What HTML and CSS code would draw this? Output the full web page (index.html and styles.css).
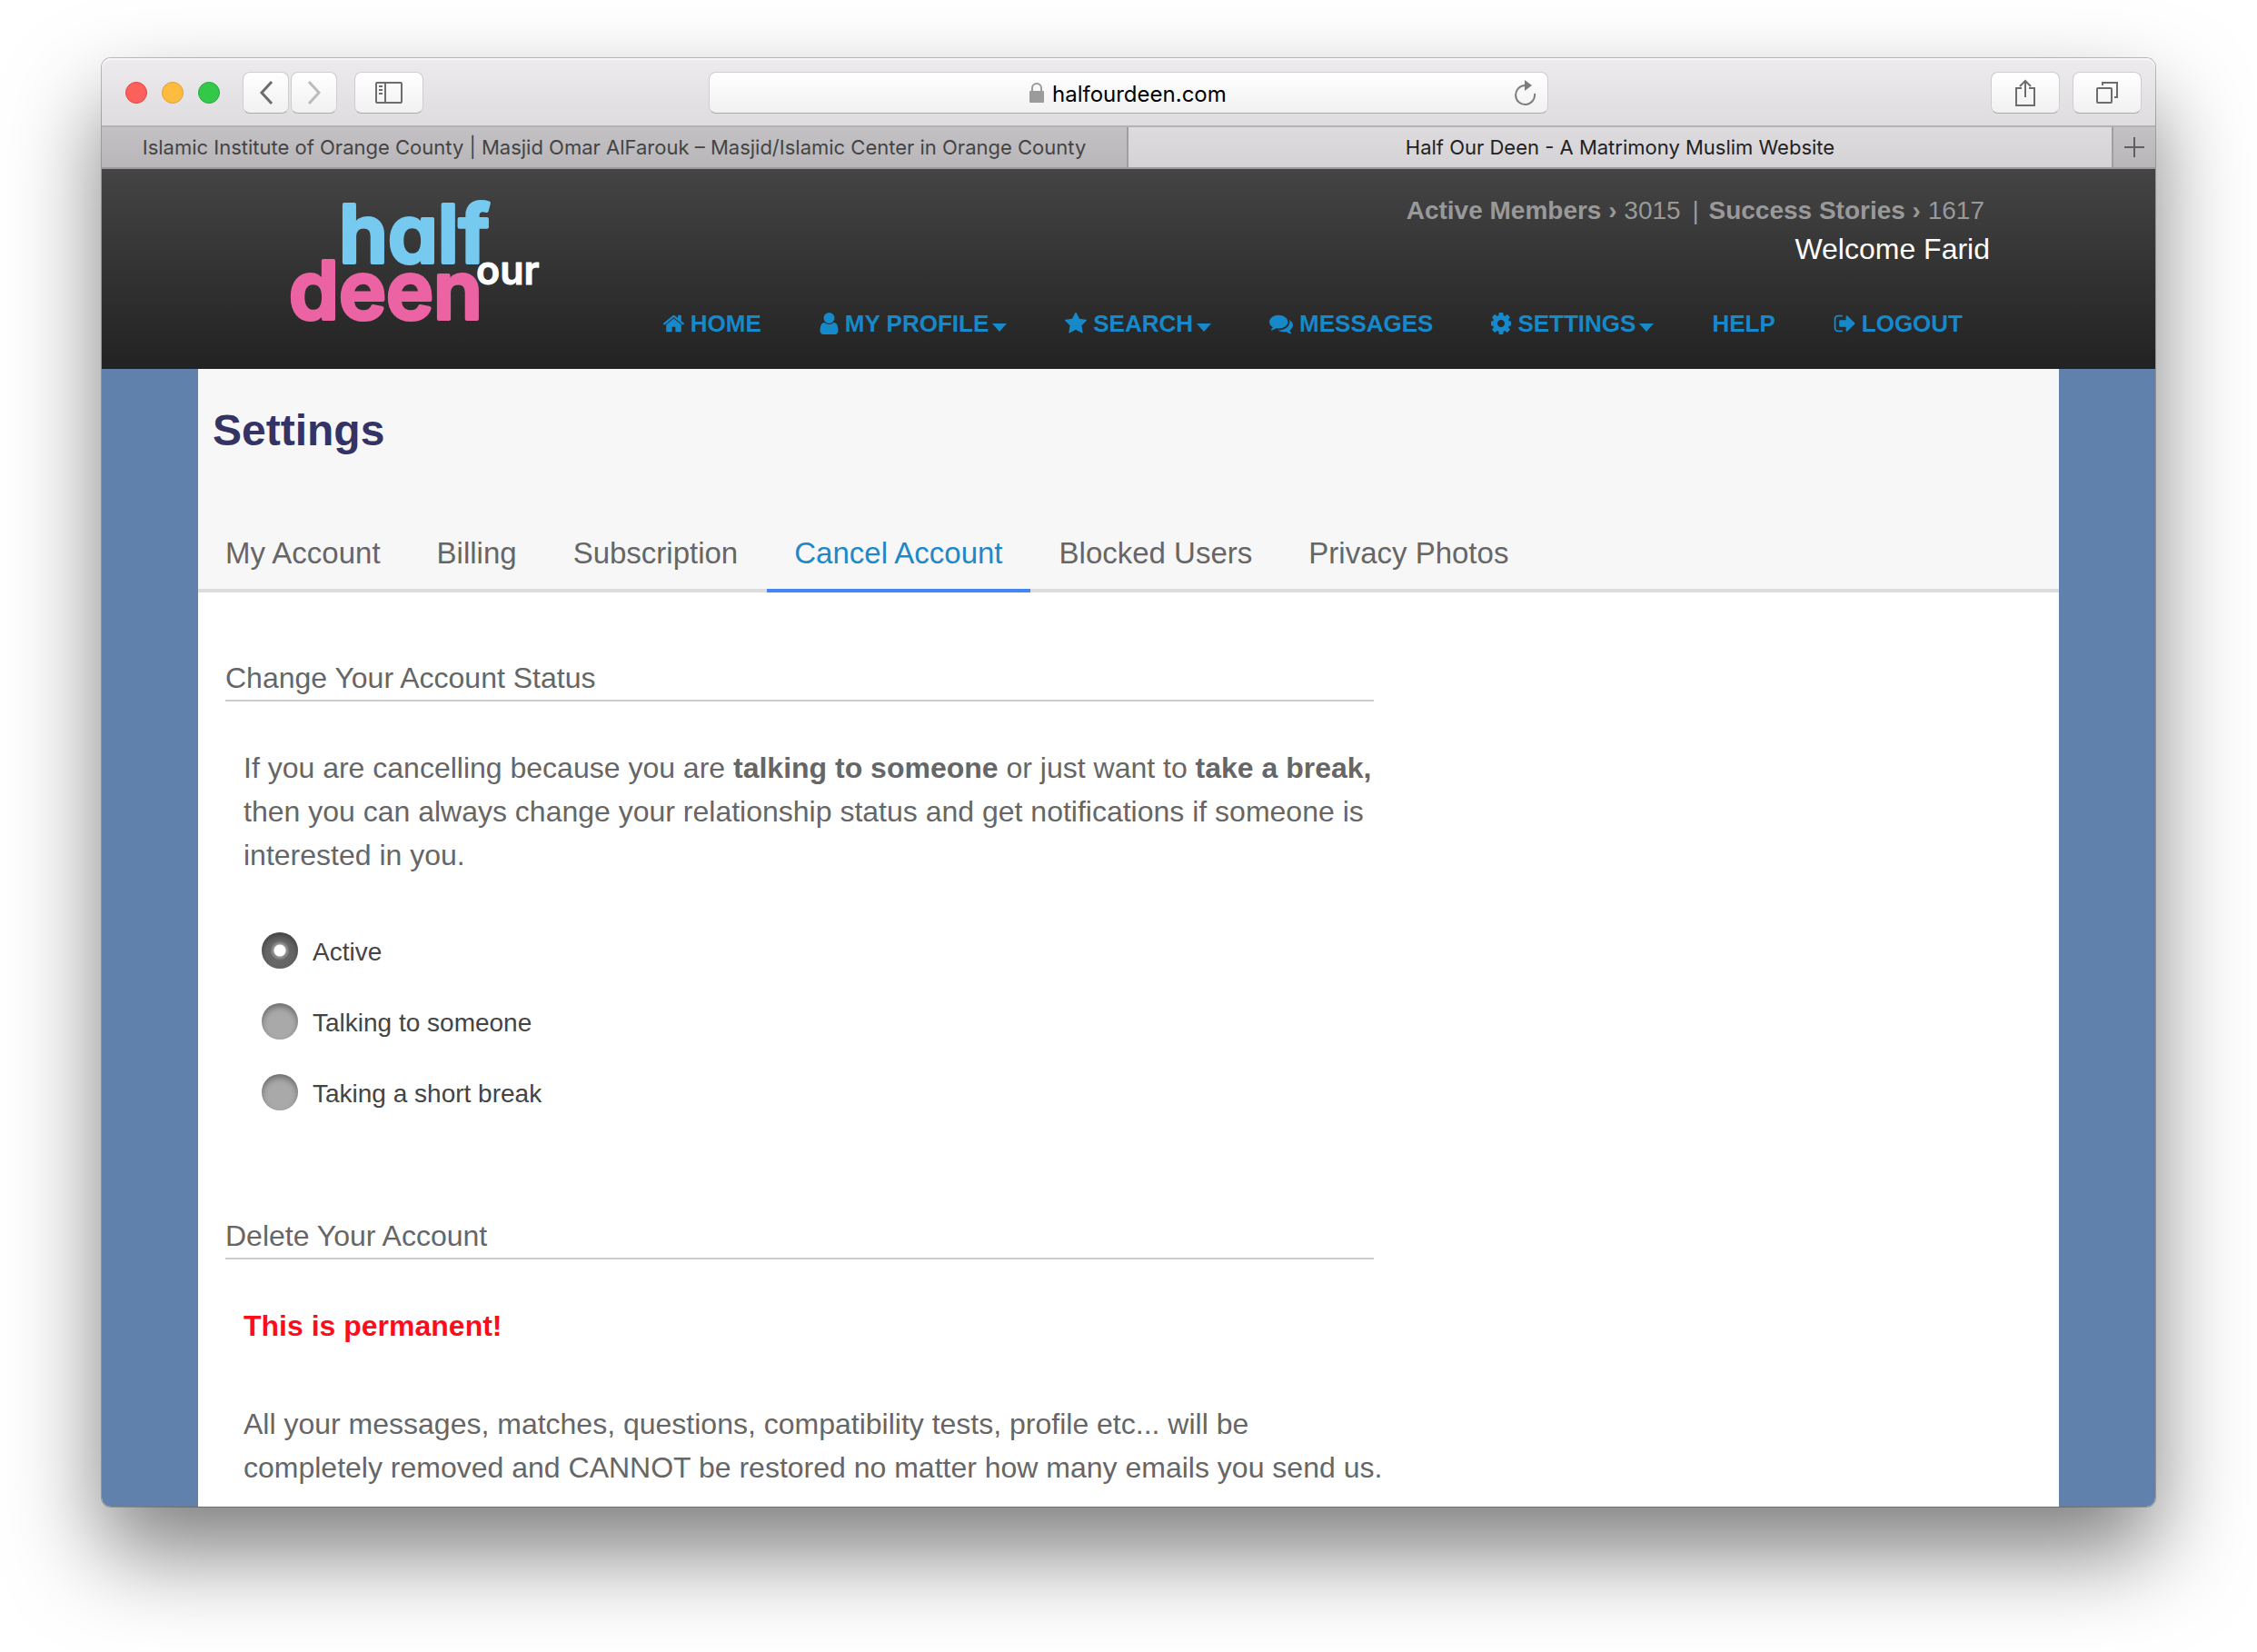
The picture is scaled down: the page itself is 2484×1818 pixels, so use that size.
FILE: index.html
```html
<!DOCTYPE html>
<html lang="en">
<head>
<meta charset="utf-8">
<meta name="viewport" content="width=device-width, initial-scale=1">
<title>Half Our Deen - A Matrimony Muslim Website</title>
<link rel="stylesheet" href="styles.css">
</head>
<body>
<div class="window">
  <div class="toolbar">
    <div class="toolbar-left">
      <div class="lights">
        <button class="light light-close" type="button" aria-label="Close"></button>
        <button class="light light-min" type="button" aria-label="Minimize"></button>
        <button class="light light-zoom" type="button" aria-label="Zoom"></button>
      </div>
      <div class="history">
        <button class="tool tool-narrow" type="button" aria-label="Back">
          <svg width="16" height="28" viewBox="0 0 16 28" fill="none" stroke="#6d6d6d" stroke-width="3"><path d="M14 2 3 14l11 12"/></svg>
        </button>
        <button class="tool tool-narrow" type="button" aria-label="Forward">
          <svg width="16" height="28" viewBox="0 0 16 28" fill="none" stroke="#bcbcbc" stroke-width="3"><path d="M2 2l11 12L2 26"/></svg>
        </button>
      </div>
      <button class="tool" type="button" aria-label="Sidebar">
        <svg width="30" height="24" viewBox="0 0 30 24" fill="none" stroke="#6d6d6d" stroke-width="2"><rect x="1" y="1" width="28" height="22" rx="1"/><path d="M11 1v22M4 5h4M4 9h4M4 13h4"/></svg>
      </button>
    </div>
    <div class="address">
      <svg width="16" height="22" viewBox="0 0 16 22"><path d="M1 9h14q1 0 1 1v11q0 1-1 1H1q-1 0-1-1V10q0-1 1-1z" fill="#9b9b9b"/><path d="M3 10V6a5 5 0 0 1 10 0v4" fill="none" stroke="#9b9b9b" stroke-width="2"/></svg>
      <input class="address-input" type="text" value="halfourdeen.com" aria-label="Address">
      <button class="reload" type="button" aria-label="Reload">
        <svg width="24" height="28" viewBox="0 0 24 28"><path d="M22 15a10.500 10.500 0 1 1-10.500-9" fill="none" stroke="#7d7d7d" stroke-width="2"/><path d="M11 0l8 6-8 6z" fill="#7d7d7d"/></svg>
      </button>
    </div>
    <div class="toolbar-right">
      <button class="tool" type="button" aria-label="Share">
        <svg width="24" height="32" viewBox="0 0 24 32" fill="none" stroke="#6d6d6d" stroke-width="2"><path d="M8 11H2v19h20V11h-6M12 21V3M6 9l6-6 6 6"/></svg>
      </button>
      <button class="tool" type="button" aria-label="Show all tabs">
        <svg width="26" height="26" viewBox="0 0 26 26" fill="none" stroke="#6d6d6d" stroke-width="2"><rect x="2" y="8" width="16" height="16" rx="1"/><path d="M8 5V2h16v16h-3"/></svg>
      </button>
    </div>
  </div>

  <nav class="browser-tabs" aria-label="Browser tabs">
    <a class="browser-tab" href="#iioc">Islamic Institute of Orange County | Masjid Omar AlFarouk – Masjid/Islamic Center in Orange County</a>
    <a class="browser-tab browser-tab-current" href="#hod">Half Our Deen - A Matrimony Muslim Website</a>
    <button class="new-tab" type="button" aria-label="New tab">
      <svg width="22" height="22" viewBox="0 0 22 22" stroke="#5f5f5f" stroke-width="2"><path d="M11 0v22M0 11h22"/></svg>
    </button>
  </nav>

  <div class="site">
    <header class="site-header">
      <a class="logo" href="#top" aria-label="half our deen">
        <svg width="280" height="190" viewBox="0 0 280 190">
          <text class="logo-word logo-half" x="55" y="103">half</text>
          <text class="logo-word logo-deen" x="0" y="165">deen</text>
          <text class="logo-our" x="206" y="127">our</text>
        </svg>
      </a>
      <div class="header-side">
        <p class="stats"><strong>Active Members ›</strong> 3015 <span class="stats-bar">|</span> <strong>Success Stories ›</strong> 1617</p>
        <p class="welcome">Welcome Farid</p>
        <nav class="menu" aria-label="Main">
          <a class="menu-link" href="#home">
            <svg class="menu-icon" width="23" height="26" viewBox="96 0 1600 1792"><path d="M1472 992v480q0 26-19 45t-45 19h-384v-384h-256v384h-384q-26 0-45-19t-19-45v-480q0-1 .5-3t.5-3l575-474 575 474q1 2 1 6zm223-69l-62 74q-8 9-21 11h-3q-13 0-21-7l-692-577-692 577q-12 8-24 7-13-2-21-11l-62-74q-8-10-7-23.500t11-21.500l719-599q32-26 76-26t76 26l244 204v-195q0-14 9-23t23-9h192q14 0 23 9t9 23v408l219 182q10 8 11 21.500t-7 23.500z"/></svg>
            HOME</a>
          <a class="menu-link" href="#profile">
            <svg class="menu-icon" width="21" height="28" viewBox="256 0 1280 1792"><path d="M1536 1399q0 109-62.500 187t-150.500 78h-854q-88 0-150.500-78t-62.500-187q0-85 8.500-160.500t31.500-152 58.500-131 94-89 134.500-34.500q131 128 313 128t313-128q76 0 134.500 34.500t94 89 58.500 131 31.500 152 8.500 160.500zm-256-887q0 159-112.500 271.500t-271.500 112.500-271.500-112.500-112.500-271.500 112.500-271.500 271.500-112.500 271.500 112.500 112.500 271.500z"/></svg>
            MY PROFILE<svg class="caret" width="16" height="9" viewBox="0 0 16 9"><path d="M0 0h16L8 9z"/></svg></a>
          <a class="menu-link" href="#search">
            <svg class="menu-icon" width="24" height="26" viewBox="64 0 1664 1792"><path d="M1728 647q0 22-26 48l-363 354 86 500q1 7 1 20 0 21-10.500 35.500t-30.500 14.500q-19 0-40-12l-449-236-449 236q-22 12-40 12-21 0-31.500-14.500t-10.500-35.500q0-6 2-20l86-500-364-354q-25-27-25-48 0-37 56-46l502-73 225-455q19-41 49-41t49 41l225 455 502 73q56 9 56 46z"/></svg>
            SEARCH<svg class="caret" width="16" height="9" viewBox="0 0 16 9"><path d="M0 0h16L8 9z"/></svg></a>
          <a class="menu-link" href="#messages">
            <svg class="menu-icon" width="26" height="26" viewBox="0 0 1792 1792"><path d="M1408 768q0 139-94 257t-256.500 186.500-353.500 68.500q-86 0-176-16-124 88-278 128-36 9-86 16h-3q-11 0-20.500-8t-11.500-21q-1-3-1-6.500t.5-6.500 2-6l2.500-5 3.500-5.500 4-5 4.500-5 4-4.500q5-6 23-25t26-29.500 22.500-29 25-38.500 20.500-44q-124-72-195-177t-71-224q0-139 94-257t256.500-186.500 353.500-68.500 353.500 68.500 256.500 186.500 94 257zm384 256q0 120-71 224.500t-195 176.500q10 24 20.500 44t25 38.500 22.500 29 26 29.500 23 25q1 1 4 4.500t4.500 5 4 5 3.500 5.500l2.500 5 2 6 .5 6.500-1 6.500q-3 14-13 22t-22 7q-50-7-86-16-154-40-278-128-90 16-176 16-271 0-472-132 58 4 88 4 161 0 309-45t264-129q125-92 192-212t67-254q0-77-23-152 129 71 204 178t75 230z"/></svg>
            MESSAGES</a>
          <a class="menu-link" href="#settings">
            <svg class="menu-icon" width="22" height="28" viewBox="192 0 1408 1792"><path d="M1152 896q0-106-75-181t-181-75-181 75-75 181 75 181 181 75 181-75 75-181zm512-109v222q0 12-8 23t-20 13l-185 28q-19 54-39 91 35 50 107 138 10 12 10 25t-9 23q-27 37-99 108t-94 71q-12 0-26-9l-138-108q-44 23-91 38-16 136-29 186-7 28-36 28h-222q-14 0-24.500-8.500t-11.500-21.500l-28-184q-49-16-90-37l-141 107q-10 9-25 9-14 0-25-11-126-114-165-168-7-10-7-23 0-12 8-23 15-21 51-66.500t54-70.500q-27-50-41-99l-183-27q-13-2-21-12.500t-8-23.500v-222q0-12 8-23t19-13l186-28q14-46 39-92-40-57-107-138-10-12-10-24 0-10 9-23 26-36 98.500-107.500t94.500-71.500q13 0 26 10l138 107q44-23 91-38 16-136 29-186 7-28 36-28h222q14 0 24.500 8.500t11.500 21.500l28 184q49 16 90 37l142-107q9-9 24-9 13 0 25 10 129 119 165 170 7 8 7 22 0 12-8 23-15 21-51 66.500t-54 70.500q26 50 41 98l183 28q13 2 21 12.500t8 23.500z"/></svg>
            SETTINGS<svg class="caret" width="16" height="9" viewBox="0 0 16 9"><path d="M0 0h16L8 9z"/></svg></a>
          <a class="menu-link" href="#help">HELP</a>
          <a class="menu-link" href="#logout">
            <svg class="menu-icon" width="24" height="26" viewBox="64 0 1568 1792"><path d="M704 1440q0 4 1 20t.5 26.500-3 23.500-10 19.500-20.500 6.500h-320q-119 0-203.500-84.500t-84.500-203.500v-704q0-119 84.500-203.500t203.500-84.500h320q13 0 22.500 9.500t9.500 22.500q0 4 1 20t.5 26.500-3 23.500-10 19.500-20.500 6.500h-320q-66 0-113 47t-47 113v704q0 66 47 113t113 47h312l11.500 1 11.500 3 8 5.500 7 9 2 13.500zm928-544q0 26-19 45l-544 544q-19 19-45 19t-45-19-19-45v-288h-448q-26 0-45-19t-19-45v-384q0-26 19-45t45-19h448v-288q0-26 19-45t45-19 45 19l544 544q19 19 19 45z"/></svg>
            LOGOUT</a>
        </nav>
      </div>
    </header>

    <main class="panel">
      <div class="panel-head">
        <h1 class="title">Settings</h1>
        <nav class="tabs" aria-label="Settings">
          <a class="tab" href="#account">My Account</a>
          <a class="tab" href="#billing">Billing</a>
          <a class="tab" href="#subscription">Subscription</a>
          <a class="tab tab-current" href="#cancel" aria-current="page">Cancel Account</a>
          <a class="tab" href="#blocked">Blocked Users</a>
          <a class="tab" href="#photos">Privacy Photos</a>
        </nav>
      </div>
      <section class="section">
        <h2 class="section-title">Change Your Account Status</h2>
        <p class="copy">If you are cancelling because you are <strong>talking to someone</strong> or just want to <strong>take a break,</strong><br>then you can always change your relationship status and get notifications if someone is<br>interested in you.</p>
        <div class="choices" role="radiogroup" aria-label="Account status">
          <label class="choice"><input class="radio" type="radio" name="status" checked>Active</label>
          <label class="choice"><input class="radio" type="radio" name="status">Talking to someone</label>
          <label class="choice"><input class="radio" type="radio" name="status">Taking a short break</label>
        </div>
      </section>
      <section class="section section-delete">
        <h2 class="section-title">Delete Your Account</h2>
        <p class="copy warning">This is permanent!</p>
        <p class="copy">All your messages, matches, questions, compatibility tests, profile etc... will be<br>completely removed and CANNOT be restored no matter how many emails you send us.</p>
      </section>
    </main>
  </div>
</div>
</body>
</html>
```
FILE: styles.css
```css
* {
  box-sizing: border-box;
}

body {
  margin: 0;
  padding: 64px 112px 160px;
  background: #fff;
  color: #666;
  font-family: "Liberation Sans", Arial, sans-serif;
  font-size: 32px;
  line-height: 48px;
}

h1, h2, p {
  margin: 0;
}

a {
  color: inherit;
  text-decoration: none;
}

button {
  padding: 0;
  border: 0;
  background: none;
}

svg {
  display: block;
  flex: none;
}

.window {
  display: flex;
  flex-direction: column;
  border-radius: 10px;
  box-shadow: 0 0 0 1px rgba(0, 0, 0, 0.24), 0 50px 100px rgba(0, 0, 0, 0.51);
}

/* Browser toolbar */

.toolbar {
  display: grid;
  grid-template-columns: minmax(0, 29fr) minmax(0, 41fr) minmax(0, 29fr);
  align-items: center;
  height: 76px;
  padding: 2px 15px 0;
  border-bottom: 2px solid #b4b2b5;
  border-radius: 10px 10px 0 0;
  background: linear-gradient(#edebee, #dedcdf);
  box-shadow: inset 0 2px #f6f5f7;
}

.toolbar-left,
.toolbar-right,
.lights,
.history {
  display: flex;
  align-items: center;
}

.toolbar-left {
  gap: 19px;
  padding-left: 11px;
}

.toolbar-right {
  justify-content: flex-end;
  gap: 14px;
}

.lights {
  gap: 16px;
  margin-right: 6px;
}

.light {
  width: 24px;
  height: 24px;
  border: 1px solid;
  border-radius: 50%;
}

.light-close {
  border-color: #e2463f;
  background: #fc605c;
}

.light-min {
  border-color: #dfa133;
  background: #fdbc40;
}

.light-zoom {
  border-color: #27aa35;
  background: #34c84a;
}

.history {
  gap: 2px;
}

.tool,
.address {
  height: 46px;
  border: 1px solid #cfcdd0;
  border-bottom-color: #acaaad;
  border-radius: 8px;
  background: linear-gradient(#fff, #f1f1f1);
}

.tool {
  display: flex;
  align-items: center;
  justify-content: center;
  width: 76px;
}

.tool-narrow {
  width: 51px;
}

.address {
  display: flex;
  align-items: center;
  justify-content: center;
  gap: 9px;
  padding: 0 12px 0 48px;
}

.address-input {
  width: 196px;
  padding: 4px 0 0;
  border: 0;
  background: none;
  color: #000;
  font: 24px/32px Inter, sans-serif;
}

.address svg:first-child {
  margin-left: auto;
}

.reload {
  margin-left: auto;
}

/* Browser tabs */

.browser-tabs {
  display: flex;
  height: 46px;
  border-bottom: 2px solid #9a999b;
  background: linear-gradient(#c3c1c4, #b8b6b9);
  color: #444;
  font: 22px/45px Inter, sans-serif;
  text-align: center;
  white-space: nowrap;
}

.browser-tab {
  width: 50%;
  border-right: 2px solid #a09ea1;
  overflow: hidden;
}

.browser-tab-current {
  flex: 1;
  border-right: 0;
  background: linear-gradient(#dddbde, #d5d3d6);
  color: #222;
}

.new-tab {
  display: flex;
  align-items: center;
  justify-content: center;
  width: 48px;
  border-left: 2px solid #a09ea1;
}

/* Site */

.site {
  border-radius: 0 0 10px 10px;
  background: #5f81ac;
}

.site-header {
  display: flex;
  justify-content: space-between;
  padding: 0 182px 0 206px;
  background: linear-gradient(#444, #222);
}

.logo text {
  font-family: Inter, sans-serif;
  font-feature-settings: "cv11";
  stroke-linejoin: round;
}

.logo-word {
  font-size: 88px;
  font-weight: 600;
  stroke-width: 4px;
}

.logo-half {
  fill: #76caf0;
  stroke: #76caf0;
}

.logo-deen {
  fill: #ec63a4;
  stroke: #ec63a4;
}

.logo-our {
  fill: #fff;
  stroke: #fff;
  stroke-width: 1px;
  font-size: 43px;
  font-weight: 600;
}

.header-side {
  display: flex;
  flex-direction: column;
  align-items: flex-end;
  padding: 26px 0 34px;
}

.stats {
  padding-right: 6px;
  color: #999;
  font-size: 28px;
  line-height: 40px;
}

.stats-bar {
  margin: 0 3px 0 5px;
}

.welcome {
  color: #fff;
  line-height: 44px;
}

.menu {
  display: flex;
  gap: 64px;
  margin-top: 44px;
  padding-right: 30px;
  font-size: 26px;
  font-weight: bold;
  line-height: 32px;
}

.menu-link {
  display: flex;
  align-items: center;
  height: 32px;
  color: #1689cb;
  white-space: nowrap;
}

.menu-icon {
  margin-right: 7px;
  fill: currentColor;
}

.caret {
  margin: 8px 0 0 4px;
  fill: currentColor;
}

/* Settings panel */

.panel {
  margin: 0 106px;
  padding-bottom: 19px;
  background: #fff;
}

.panel-head {
  padding-top: 40px;
  background: #f7f7f7;
}

.title {
  padding-left: 16px;
  color: #333366;
  font-size: 48px;
  line-height: 56px;
}

.tabs {
  display: flex;
  gap: 2px;
  margin-top: 83px;
  box-shadow: inset 0 -4px #dcdcdc;
}

.tab {
  padding: 0 30px 15px;
  border-bottom: 4px solid transparent;
  font-size: 33px;
  white-space: nowrap;
}

.tab-current {
  border-color: #4387f2;
  color: #1d89c9;
}

.section {
  padding: 74px 30px 0;
}

.section-delete {
  padding-top: 118px;
}

.section-title {
  max-width: 1264px;
  padding-bottom: 4px;
  border-bottom: 2px solid #ccc;
  font-size: 32px;
  font-weight: normal;
  line-height: 40px;
}

.copy {
  margin-top: 49px;
  padding-left: 20px;
}

.warning {
  color: #fd0d1b;
  font-weight: bold;
}

.warning + .copy {
  margin-top: 60px;
}

.choices {
  display: grid;
  justify-items: start;
  gap: 38px;
  margin: 61px 0 0 40px;
}

.choice {
  display: flex;
  align-items: flex-end;
  gap: 16px;
  height: 40px;
  color: #444;
  font-size: 28px;
  line-height: 36px;
}

.radio {
  width: 40px;
  height: 40px;
  margin: 0;
  border-radius: 50%;
  background: #a9a9a9;
  box-shadow: inset 0 4px 6px rgba(0, 0, 0, 0.35);
  appearance: none;
}

.radio:checked {
  background: radial-gradient(circle, #fff 6px, #999 7px, #666 11px);
}
```
